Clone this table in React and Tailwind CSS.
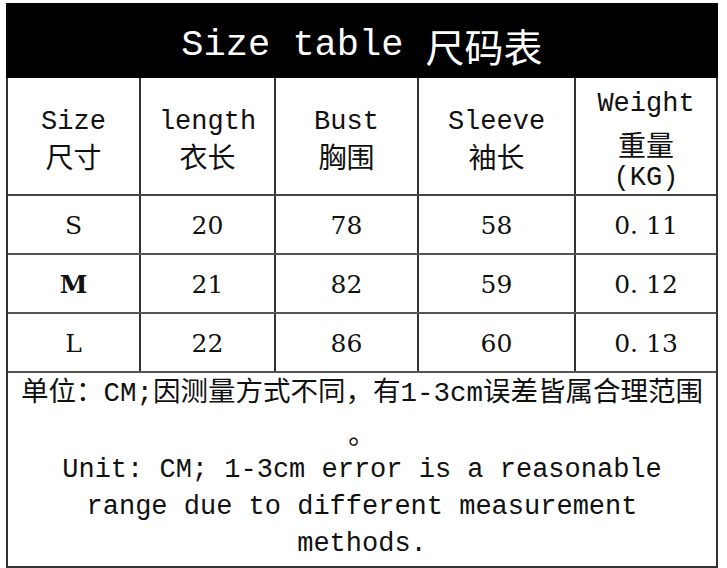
import React from "react";

const MONO = "font-['Liberation_Mono','Noto_Sans_CJK_SC',monospace]";
const CJK = "font-['Noto_Sans_CJK_SC',sans-serif]";
const SERIF = "font-['DejaVu_Serif',serif]";

const headers = [
  { en: "Size", zh: "尺寸" },
  { en: "length", zh: "衣长" },
  { en: "Bust", zh: "胸围" },
  { en: "Sleeve", zh: "袖长" },
];

const rows = [
  { size: "S", v: ["20", "78", "58", "0. 11"] },
  { size: "M", v: ["21", "82", "59", "0. 12"], bold: true },
  { size: "L", v: ["22", "86", "60", "0. 13"] },
];

const GRID = "grid grid-cols-[133px_135px_143px_157px_140px]";

export default function App() {
  return (
    <div className="w-[727px] h-[568px] bg-white pt-[3px] pl-[6px] text-[#111]">
      <div className="w-[712px]">
        <div className="h-[75px] bg-black flex items-center justify-center pt-[10px] text-white">
          <span className={`${MONO} text-[37px] leading-none whitespace-pre`}>Size table </span>
          <span className={`${CJK} text-[39px] leading-none`}>尺码表</span>
        </div>
        <div className="border-x-2 border-b-2 border-[#333]">
          <div className={`${GRID} h-[118px] border-b-2 border-[#444]`}>
            {headers.map((h) => (
              <div
                key={h.en}
                className="border-r-2 border-[#333] flex flex-col items-center justify-center pt-[6px]"
              >
                <div className={`${MONO} text-[27px] h-[34px] leading-[34px]`}>{h.en}</div>
                <div className={`${CJK} text-[28px] h-[34px] leading-[34px]`}>{h.zh}</div>
              </div>
            ))}
            <div className="flex flex-col items-center justify-center pt-[4px]">
              <div className={`${MONO} text-[27px] h-[42px] leading-[42px]`}>Weight</div>
              <div className={`${CJK} text-[28px] h-[38px] leading-[38px]`}>重量</div>
              <div className={`${MONO} text-[27px] h-[30px] leading-[30px]`}>(KG)</div>
            </div>
          </div>
          {rows.map((r) => (
            <div key={r.size} className={`${GRID} h-[59px] border-b-2 border-[#555]`}>
              <div
                className={`border-r-2 border-[#333] flex items-center justify-center pt-[2px] ${SERIF} text-[25px] ${
                  r.bold ? "font-bold" : ""
                }`}
              >
                {r.size}
              </div>
              {r.v.map((val, i) => (
                <div
                  key={i}
                  className={`${i < 3 ? "border-r-2 border-[#333]" : ""} flex items-center justify-center pt-[2px] ${SERIF} text-[25px] whitespace-pre`}
                >
                  {val}
                </div>
              ))}
            </div>
          ))}
          <div className="h-[193px] flex flex-col items-center pt-[2px]">
            <div className={`${MONO} text-[27.5px] h-[38px] leading-[38px] whitespace-nowrap`}>
              单位：CM;因测量方式不同，有1-3cm误差皆属合理范围
            </div>
            <div className={`${CJK} text-[27.5px] h-[38px] leading-[38px]`}>。</div>
            <div className={`${MONO} text-[27px] h-[38px] leading-[38px] whitespace-pre`}>
              Unit: CM; 1-3cm error is a reasonable
            </div>
            <div className={`${MONO} text-[27px] h-[37px] leading-[37px] whitespace-pre`}>
              range due to different measurement
            </div>
            <div className={`${MONO} text-[27px] h-[37px] leading-[37px] whitespace-pre`}>methods.</div>
          </div>
        </div>
      </div>
    </div>
  );
}
